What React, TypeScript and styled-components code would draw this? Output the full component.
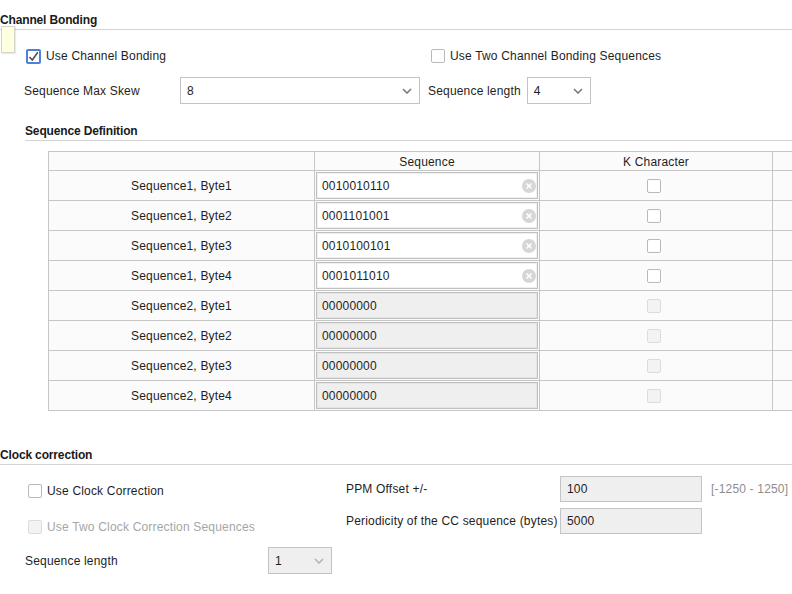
import React from 'react';
import styled, { createGlobalStyle } from 'styled-components';

const Global = createGlobalStyle`
  html, body { margin: 0; padding: 0; background: #ffffff; }
  body {
    font-family: "Liberation Sans", Arial, sans-serif;
    font-size: 12px;
    color: #1e1e1e;
    letter-spacing: 0.18px;
    overflow: hidden;
  }
  * { box-sizing: border-box; }
`;

const Page = styled.div`
  position: relative;
  width: 792px;
  height: 594px;
  overflow: hidden;
  background: #ffffff;
`;

const SectionHeader = styled.div<{ $indent?: number; $top?: number }>`
  margin-left: ${(p) => p.$indent ?? 0}px;
  margin-top: ${(p) => p.$top ?? 0}px;
  padding: 13px 0 2px;
  line-height: 14px;
  font-weight: bold;
  letter-spacing: -0.15px;
  color: #1a1a1a;
  border-bottom: 1px solid #d3d3d3;
`;

const Tooltip = styled.div`
  position: absolute;
  left: 1px;
  top: 26px;
  width: 14px;
  height: 27px;
  background: #ffffe1;
  border: 1px solid #d6d6c8;
  box-shadow: 1px 1px 1px rgba(0, 0, 0, 0.08);
`;

const CheckRow = styled.div<{ $top?: number; $left?: number }>`
  display: flex;
  align-items: center;
  height: 16px;
  margin-top: ${(p) => p.$top ?? 0}px;
  padding-left: ${(p) => p.$left ?? 0}px;
`;

const CheckItem = styled.label<{ $width?: number; $disabled?: boolean }>`
  display: flex;
  align-items: center;
  gap: 5px;
  width: ${(p) => (p.$width ? `${p.$width}px` : 'auto')};
  line-height: 14px;
  color: ${(p) => (p.$disabled ? '#a6a6a6' : '#1e1e1e')};
`;

const Box = styled.span<{ $checked?: boolean; $disabled?: boolean }>`
  display: inline-flex;
  align-items: center;
  justify-content: center;
  flex: none;
  width: ${(p) => (p.$checked ? 15 : 14)}px;
  height: ${(p) => (p.$checked ? 15 : 14)}px;
  border-radius: 2px;
  border: ${(p) =>
    p.$checked ? '2px solid #5080d6' : p.$disabled ? '1px solid #dcdcdc' : '1px solid #b9b9b9'};
  background: ${(p) => (p.$disabled ? '#f3f3f3' : '#ffffff')};
`;

const FieldRow = styled.div<{ $top?: number }>`
  display: flex;
  align-items: center;
  height: 27px;
  margin-top: ${(p) => p.$top ?? 0}px;
`;

const FieldLabel = styled.span<{ $width?: number; $left?: number; $gap?: number }>`
  flex: none;
  width: ${(p) => (p.$width ? `${p.$width}px` : 'auto')};
  margin-left: ${(p) => p.$left ?? 0}px;
  margin-right: ${(p) => p.$gap ?? 0}px;
  line-height: 14px;
  white-space: nowrap;
`;

const SelectBox = styled.div<{ $width: number; $disabled?: boolean }>`
  flex: none;
  display: flex;
  align-items: center;
  justify-content: space-between;
  width: ${(p) => p.$width}px;
  height: 27px;
  padding: 0 7px 0 6px;
  border: 1px solid #c3c3c3;
  background: ${(p) => (p.$disabled ? '#efefef' : '#ffffff')};
  color: #1e1e1e;
`;

const TableGrid = styled.div`
  display: grid;
  width: max-content;
  margin: 10px 0 0 48px;
  grid-template-columns: 265px 224px 232px 60px;
  grid-template-rows: 18px repeat(8, 29px);
  gap: 1px;
  padding: 1px;
  background: #c6c6c6;
`;

const Cell = styled.div<{ $shift?: number }>`
  display: flex;
  align-items: center;
  justify-content: center;
  padding-top: 1px;
  padding-right: ${(p) => p.$shift ?? 0}px;
  background: #fbfbfb;
  color: #1e1e1e;
  white-space: nowrap;
`;

const InputCell = styled.div`
  display: flex;
  align-items: center;
  justify-content: center;
  background: #fbfbfb;
`;

const SeqInput = styled.div<{ $disabled?: boolean }>`
  display: flex;
  align-items: center;
  justify-content: space-between;
  width: 222px;
  height: 27px;
  padding: 1px 1px 0 5px;
  border: 1px solid #c0c0c0;
  box-shadow: inset 0 0 0 1px ${(p) => (p.$disabled ? '#e4e4e4' : '#f0f0f0')};
  background: ${(p) => (p.$disabled ? '#efefef' : '#ffffff')};
`;

const ClearIcon = styled.span`
  display: inline-flex;
  align-items: center;
  justify-content: center;
  width: 14px;
  height: 14px;
  margin-top: -1px;
  border-radius: 50%;
  background: #d6d6d6;
`;

const ClockBody = styled.div`
  display: flex;
`;

const LeftCol = styled.div`
  width: 346px;
  padding: 13px 0 0 25px;
  display: flex;
  flex-direction: column;
  gap: 10px;
`;

const OptionRow = styled.div`
  display: flex;
  align-items: center;
  height: 26px;
  padding-left: 3px;
`;

const LengthRow = styled(FieldRow)`
  margin-top: -3px;
`;

const RightGrid = styled.div`
  display: grid;
  grid-template-columns: 214px 142px auto;
  grid-auto-rows: 26px;
  row-gap: 6px;
  align-items: center;
  padding-top: 11px;
`;

const ValueInput = styled.div`
  display: flex;
  align-items: center;
  height: 26px;
  padding-left: 6px;
  border: 1px solid #c4c4c4;
  background: #efefef;
  color: #1e1e1e;
`;

const RangeText = styled.span`
  padding-left: 9px;
  color: #8e8e8e;
  white-space: nowrap;
`;

const Chevron = ({ light }: { light?: boolean }) => (
  <svg width="10" height="6" viewBox="0 0 10 6">
    <path d="M1 1 L5 5 L9 1" fill="none" stroke={light ? '#b5b5b5' : '#7a7a7a'} strokeWidth="1.6" />
  </svg>
);

const CheckMark = () => (
  <svg width="11" height="11" viewBox="0 0 11 11">
    <path d="M1.5 6 L4.3 9 L9.8 1.2" fill="none" stroke="#4a4a4a" strokeWidth="1.5" />
  </svg>
);

const Checkbox = ({ checked, disabled }: { checked?: boolean; disabled?: boolean }) => (
  <Box $checked={checked} $disabled={disabled}>
    {checked ? <CheckMark /> : null}
  </Box>
);

const Clear = () => (
  <ClearIcon>
    <svg width="8" height="8" viewBox="0 0 8 8">
      <path d="M1.5 1.5 L6.5 6.5 M6.5 1.5 L1.5 6.5" stroke="#ffffff" strokeWidth="1.6" />
    </svg>
  </ClearIcon>
);

const sequences = [
  { label: 'Sequence1, Byte1', value: '0010010110', enabled: true },
  { label: 'Sequence1, Byte2', value: '0001101001', enabled: true },
  { label: 'Sequence1, Byte3', value: '0010100101', enabled: true },
  { label: 'Sequence1, Byte4', value: '0001011010', enabled: true },
  { label: 'Sequence2, Byte1', value: '00000000', enabled: false },
  { label: 'Sequence2, Byte2', value: '00000000', enabled: false },
  { label: 'Sequence2, Byte3', value: '00000000', enabled: false },
  { label: 'Sequence2, Byte4', value: '00000000', enabled: false },
];

export default function App() {
  return (
    <Page>
      <Global />
      <SectionHeader>Channel Bonding</SectionHeader>
      <Tooltip />

      <CheckRow $top={18} $left={26}>
        <CheckItem $width={405}>
          <Checkbox checked />
          Use Channel Bonding
        </CheckItem>
        <CheckItem>
          <Checkbox />
          Use Two Channel Bonding Sequences
        </CheckItem>
      </CheckRow>

      <FieldRow $top={13}>
        <FieldLabel $left={24} $width={156}>Sequence Max Skew</FieldLabel>
        <SelectBox $width={240}>
          <span>8</span>
          <Chevron />
        </SelectBox>
        <FieldLabel $left={8} $gap={6}>Sequence length</FieldLabel>
        <SelectBox $width={64}>
          <span>4</span>
          <Chevron />
        </SelectBox>
      </FieldRow>

      <SectionHeader $indent={25} $top={7}>Sequence Definition</SectionHeader>

      <TableGrid>
        <Cell />
        <Cell>Sequence</Cell>
        <Cell>K Character</Cell>
        <Cell />
        {sequences.map((s) => (
          <React.Fragment key={s.label}>
            <Cell>{s.label}</Cell>
            <InputCell>
              <SeqInput $disabled={!s.enabled}>
                <span>{s.value}</span>
                {s.enabled ? <Clear /> : null}
              </SeqInput>
            </InputCell>
            <Cell $shift={4}>
              <Checkbox disabled={!s.enabled} />
            </Cell>
            <Cell />
          </React.Fragment>
        ))}
      </TableGrid>

      <SectionHeader $top={24}>Clock correction</SectionHeader>

      <ClockBody>
        <LeftCol>
          <OptionRow>
            <CheckItem>
              <Checkbox />
              Use Clock Correction
            </CheckItem>
          </OptionRow>
          <OptionRow>
            <CheckItem $disabled>
              <Checkbox disabled />
              Use Two Clock Correction Sequences
            </CheckItem>
          </OptionRow>
          <LengthRow>
            <FieldLabel $width={243}>Sequence length</FieldLabel>
            <SelectBox $width={64} $disabled>
              <span>1</span>
              <Chevron light />
            </SelectBox>
          </LengthRow>
        </LeftCol>
        <RightGrid>
          <FieldLabel>PPM Offset +/-</FieldLabel>
          <ValueInput>100</ValueInput>
          <RangeText>[-1250 - 1250]</RangeText>
          <FieldLabel>Periodicity of the CC sequence (bytes)</FieldLabel>
          <ValueInput>5000</ValueInput>
          <span />
        </RightGrid>
      </ClockBody>
    </Page>
  );
}
